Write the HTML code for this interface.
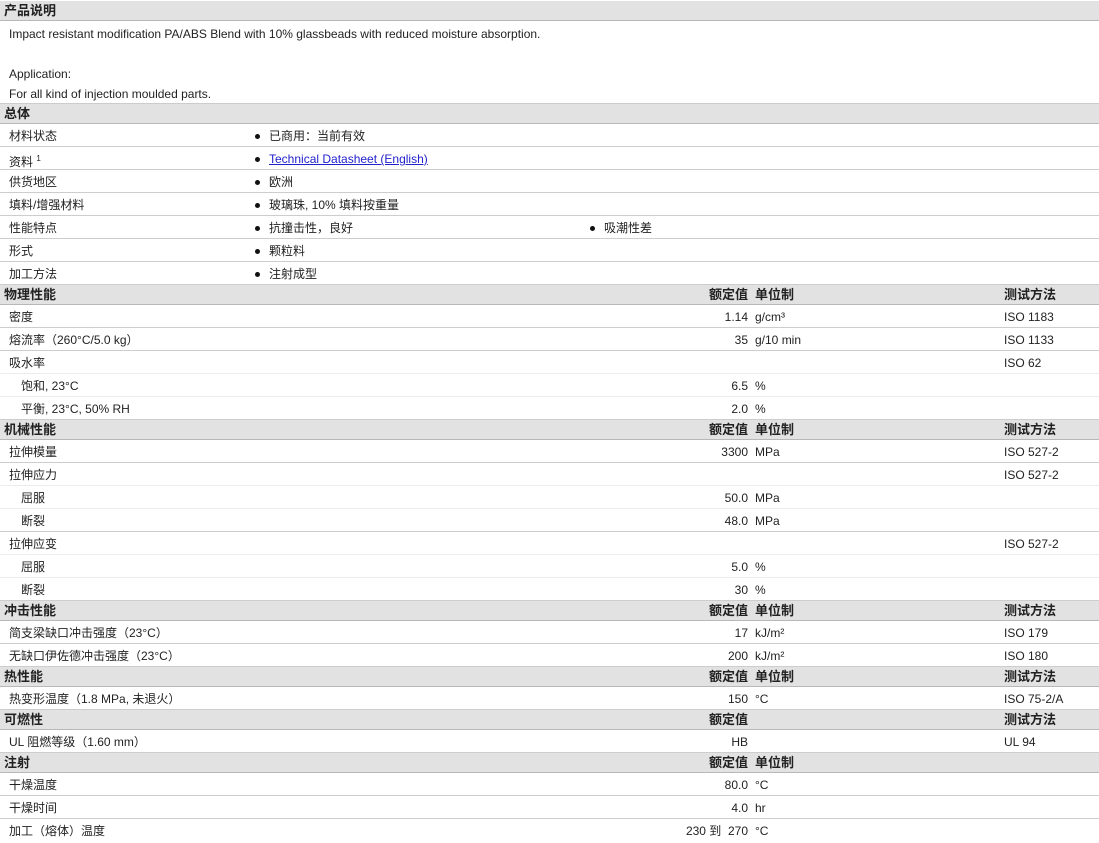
<!DOCTYPE html><html><head><meta charset="utf-8"><style>
body{margin:0;background:#fff;font-family:"Liberation Sans","Noto Sans CJK SC",sans-serif;font-size:12px;color:#222;width:1099px;height:841px;overflow:hidden}
.h{position:relative;height:19px;line-height:19px;background:#e2e2e2;border-bottom:1px solid #b8b8b8;font-weight:bold;font-size:13px}
.r{position:relative;height:22px;line-height:24px;border-bottom:1px solid #cdcdcd}
.s{border-bottom:1px solid #ececec}
span{position:absolute;white-space:nowrap}
.l{left:9px}.i{left:21px}.t{left:4px}
.v{right:351px;text-align:right}.u{left:755px}.m{left:1004px}
.b1{left:255px}.b2{left:590px}
.b1:before,.b2:before{content:"";position:absolute;left:0;top:10px;width:5px;height:5px;border-radius:50%;background:#111}
.b1 i,.b2 i{font-style:normal;margin-left:14px}
a{color:#2222cc}
.d{height:83px;padding-top:3px;box-sizing:border-box;line-height:20px;padding-left:9px;border-bottom:1px solid #ccc}
</style></head><body>
<div class="h" style="margin-top:1px;height:19px"><span class="t">产品说明</span></div>
<div class="d">Impact resistant modification PA/ABS Blend with 10% glassbeads with reduced moisture absorption.<br><br>Application:<br>For all kind of injection moulded parts.</div>
<div class="h"><span class="t">总体</span></div>
<div class="r"><span class="l">材料状态</span><span class="b1"><i>已商用：当前有效</i></span></div>
<div class="r"><span class="l">资料 <sup style="font-size:8px">1</sup></span><span class="b1"><i><a href="#">Technical Datasheet (English)</a></i></span></div>
<div class="r"><span class="l">供货地区</span><span class="b1"><i>欧洲</i></span></div>
<div class="r"><span class="l">填料/增强材料</span><span class="b1"><i>玻璃珠, 10% 填料按重量</i></span></div>
<div class="r"><span class="l">性能特点</span><span class="b1"><i>抗撞击性，良好</i></span><span class="b2"><i>吸潮性差</i></span></div>
<div class="r"><span class="l">形式</span><span class="b1"><i>颗粒料</i></span></div>
<div class="r"><span class="l">加工方法</span><span class="b1"><i>注射成型</i></span></div>
<div class="h"><span class="t">物理性能</span><span class="v">额定值</span><span class="u">单位制</span><span class="m">测试方法</span></div>
<div class="r"><span class="l">密度</span><span class="v">1.14</span><span class="u">g/cm³</span><span class="m">ISO 1183</span></div>
<div class="r"><span class="l">熔流率（260°C/5.0 kg）</span><span class="v">35</span><span class="u">g/10 min</span><span class="m">ISO 1133</span></div>
<div class="r s"><span class="l">吸水率</span><span class="m">ISO 62</span></div>
<div class="r s"><span class="i">饱和, 23°C</span><span class="v">6.5</span><span class="u">%</span></div>
<div class="r"><span class="i">平衡, 23°C, 50% RH</span><span class="v">2.0</span><span class="u">%</span></div>
<div class="h"><span class="t">机械性能</span><span class="v">额定值</span><span class="u">单位制</span><span class="m">测试方法</span></div>
<div class="r"><span class="l">拉伸模量</span><span class="v">3300</span><span class="u">MPa</span><span class="m">ISO 527-2</span></div>
<div class="r s"><span class="l">拉伸应力</span><span class="m">ISO 527-2</span></div>
<div class="r s"><span class="i">屈服</span><span class="v">50.0</span><span class="u">MPa</span></div>
<div class="r"><span class="i">断裂</span><span class="v">48.0</span><span class="u">MPa</span></div>
<div class="r s"><span class="l">拉伸应变</span><span class="m">ISO 527-2</span></div>
<div class="r s"><span class="i">屈服</span><span class="v">5.0</span><span class="u">%</span></div>
<div class="r"><span class="i">断裂</span><span class="v">30</span><span class="u">%</span></div>
<div class="h"><span class="t">冲击性能</span><span class="v">额定值</span><span class="u">单位制</span><span class="m">测试方法</span></div>
<div class="r"><span class="l">简支梁缺口冲击强度（23°C）</span><span class="v">17</span><span class="u">kJ/m²</span><span class="m">ISO 179</span></div>
<div class="r"><span class="l">无缺口伊佐德冲击强度（23°C）</span><span class="v">200</span><span class="u">kJ/m²</span><span class="m">ISO 180</span></div>
<div class="h"><span class="t">热性能</span><span class="v">额定值</span><span class="u">单位制</span><span class="m">测试方法</span></div>
<div class="r"><span class="l">热变形温度（1.8 MPa, 未退火）</span><span class="v">150</span><span class="u">°C</span><span class="m">ISO 75-2/A</span></div>
<div class="h"><span class="t">可燃性</span><span class="v">额定值</span><span class="m">测试方法</span></div>
<div class="r"><span class="l">UL 阻燃等级（1.60 mm）</span><span class="v">HB</span><span class="m">UL 94</span></div>
<div class="h"><span class="t">注射</span><span class="v">额定值</span><span class="u">单位制</span></div>
<div class="r"><span class="l">干燥温度</span><span class="v">80.0</span><span class="u">°C</span></div>
<div class="r"><span class="l">干燥时间</span><span class="v">4.0</span><span class="u">hr</span></div>
<div class="r" style="border:0"><span class="l">加工（熔体）温度</span><span class="v">230 到&nbsp; 270</span><span class="u">°C</span></div>
</body></html>
